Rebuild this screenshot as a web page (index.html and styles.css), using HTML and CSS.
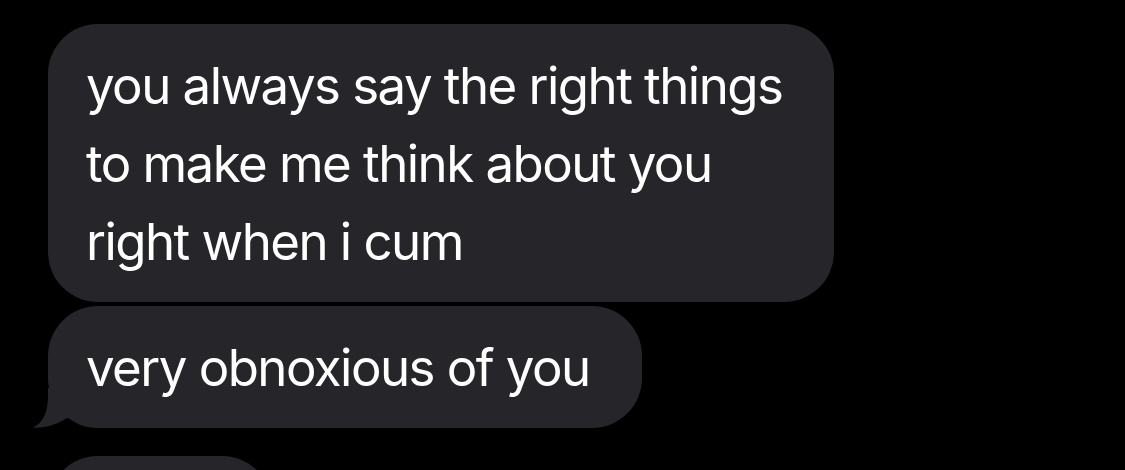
FILE: index.html
```html
<!DOCTYPE html>
<html lang="en">
<head>
<meta charset="utf-8">
<title>Messages</title>
<link rel="stylesheet" href="styles.css">
</head>
<body>
<div class="thread">
  <div class="bubble">you always say the right things<br>to make me think about you<br>right when i cum</div>
  <div class="bubble bubble-tail">very obnoxious of you<svg class="tail" width="40" height="40" viewBox="0 0 40 40"><path d="M16 0 L16 8 C16 24 11 35 1 39.6 C12 40.6 24 37 35 30 L40 30 L40 0 Z" fill="#262529"/></svg></div>
  <div class="bubble bubble-next"></div>
</div>
</body>
</html>
```
FILE: styles.css
```css
html, body {
  margin: 0;
  padding: 0;
  background: #000;
  overflow: hidden;
}
.thread {
  display: flex;
  flex-direction: column;
  align-items: flex-start;
  gap: 4px;
  padding: 24px 0 0 48px;
}
.bubble {
  position: relative;
  background: #262529;
  color: #fff;
  border-radius: 50px;
  font-family: Inter, "Noto Sans", sans-serif;
  font-size: 51px;
  line-height: 78px;
  letter-spacing: -1.55px;
  padding: 23px 52px 21px 38px;
  white-space: nowrap;
}
.tail {
  position: absolute;
  left: -16px;
  bottom: 0;
  display: block;
}
.bubble-next {
  margin-top: 24px;
  width: 224px;
  height: 78px;
  padding: 23px 0 21px 0;
}
```
